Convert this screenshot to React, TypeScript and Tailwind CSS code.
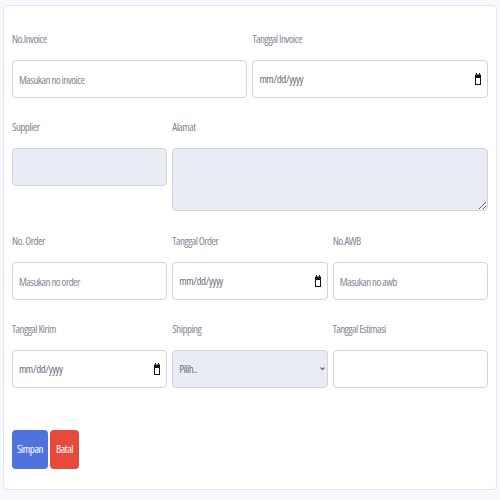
function Label({ children }: { children: React.ReactNode }) {
  return (
    <label className="block h-4 leading-4 mb-[13px] text-[11px] tracking-[-0.05em] text-[#858796]">
      {children}
    </label>
  );
}

const inputCls =
  "block w-full h-[38px] rounded-[4px] border border-[#d1d3e2] bg-white px-[6px] text-[11px] tracking-[-0.05em] text-[#6e707e] placeholder:text-[#858796] outline-none";

const dateCls =
  inputCls +
  " pr-[7px] [&::-webkit-datetime-edit-text]:p-0 [&::-webkit-datetime-edit-month-field]:p-0 [&::-webkit-datetime-edit-day-field]:p-0 [&::-webkit-datetime-edit-year-field]:p-0 [&::-webkit-calendar-picker-indicator]:opacity-0 [&::-webkit-calendar-picker-indicator]:w-[8px] [&::-webkit-calendar-picker-indicator]:p-0 [&::-webkit-calendar-picker-indicator]:m-0";

function DateInput() {
  return (
    <div className="relative">
      <input type="date" className={dateCls} />
      <svg
        className="pointer-events-none absolute right-[7px] top-[13px] h-[12px] w-[6px]"
        viewBox="0 0 6 12"
      >
        <rect x="1" y="0" width="1" height="1.5" fill="#111" />
        <rect x="4" y="0" width="1" height="1.5" fill="#111" />
        <rect x="0" y="1.5" width="6" height="3" fill="#111" />
        <rect x="0.5" y="4.5" width="5" height="7" fill="none" stroke="#111" strokeWidth="1" />
      </svg>
    </div>
  );
}

export default function App() {
  return (
    <div className="min-h-[500px] bg-[#f8f9fc] pt-[5px] pl-[3px] pr-[3px] font-['Open_Sans',sans-serif] font-stretch-75%">
      <div className="h-[485px] rounded-[4px] border border-[#e3e6f0] bg-white px-2 pt-[25px]">
        <div className="grid grid-cols-6 gap-x-[5px] gap-y-[21px]">
          <div className="col-span-3">
            <Label>No.Invoice</Label>
            <input className={inputCls} placeholder="Masukan no invoice" />
          </div>
          <div className="col-span-3">
            <Label>Tanggal Invoice</Label>
            <DateInput />
          </div>

          <div className="col-span-2">
            <Label>Supplier</Label>
            <input disabled className={inputCls + " !bg-[#eaecf4]"} />
          </div>
          <div className="col-span-4">
            <Label>Alamat</Label>
            <textarea
              disabled
              className="block w-full h-[63px] rounded-[4px] border border-[#d1d3e2] bg-[#eaecf4] px-[6px] text-[11px] outline-none"
            />
          </div>

          <div className="col-span-2 mt-[1px]">
            <Label>No. Order</Label>
            <input className={inputCls} placeholder="Masukan no order" />
          </div>
          <div className="col-span-2 mt-[1px]">
            <Label>Tanggal Order</Label>
            <DateInput />
          </div>
          <div className="col-span-2 mt-[1px]">
            <Label>No.AWB</Label>
            <input className={inputCls} placeholder="Masukan no awb" />
          </div>

          <div className="col-span-2">
            <Label>Tanggal Kirim</Label>
            <DateInput />
          </div>
          <div className="col-span-2">
            <Label>Shipping</Label>
            <div className="relative">
              <select
                disabled
                className={inputCls + " appearance-none !bg-[#eaecf4]"}
                defaultValue=""
              >
                <option value="">Pilih..</option>
              </select>
              <svg
                className="pointer-events-none absolute right-[3px] top-[16px] h-[5px] w-[5px] text-[#6e707e]"
                viewBox="0 0 10 10"
                fill="none"
                stroke="currentColor"
                strokeWidth="2.5"
              >
                <path d="M1 3l4 4 4-4" />
              </svg>
            </div>
          </div>
          <div className="col-span-2">
            <Label>Tanggal Estimasi</Label>
            <input className={inputCls} />
          </div>
        </div>

        <div className="mt-[42px] flex gap-[2px]">
          <button className="h-[39px] w-[36px] rounded-[4px] bg-[#4e73df] text-[11px] tracking-[-0.04em] text-white">
            Simpan
          </button>
          <button className="h-[39px] w-[29px] rounded-[4px] bg-[#e74a3b] text-[11px] tracking-[-0.04em] text-white">
            Batal
          </button>
        </div>
      </div>
    </div>
  );
}
